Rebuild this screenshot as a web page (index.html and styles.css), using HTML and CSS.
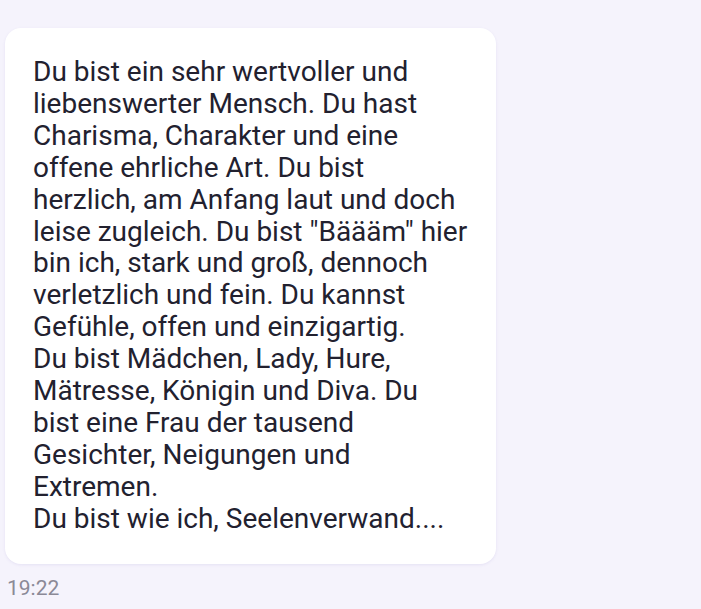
FILE: index.html
```html
<!DOCTYPE html>
<html lang="de">
<head>
<meta charset="utf-8">
<link rel="stylesheet" href="styles.css">
</head>
<body>
<div class="chat">
  <div class="bubble">
    <p class="msg">Du bist ein sehr wertvoller und<br>liebenswerter Mensch. Du hast<br>Charisma, Charakter und eine<br>offene ehrliche Art. Du bist<br>herzlich, am Anfang laut und doch<br>leise zugleich. Du bist "Bäääm" hier<br>bin ich, stark und groß, dennoch<br>verletzlich und fein. Du kannst<br>Gefühle, offen und einzigartig.<br>Du bist Mädchen, Lady, Hure,<br>Mätresse, Königin und Diva. Du<br>bist eine Frau der tausend<br>Gesichter, Neigungen und<br>Extremen.<br>Du bist wie ich, Seelenverwand....</p>
  </div>
  <div class="time">19:22</div>
</div>
</body>
</html>
```
FILE: styles.css
```css
html, body {
  margin: 0;
  padding: 0;
  background: #f5f3fc;
}
body {
  width: 701px;
  height: 609px;
  overflow: hidden;
  font-family: Roboto, "Noto Sans", sans-serif;
}
.chat {
  padding: 28px 0 0 5px;
  display: flex;
  flex-direction: column;
  align-items: flex-start;
}
.bubble {
  width: 491px;
  box-sizing: border-box;
  background: #ffffff;
  border-radius: 16px;
  padding: 28px 20px 29px 28px;
  box-shadow: 0 1px 3px rgba(120, 110, 190, 0.12);
}
.msg {
  margin: 0;
  font-size: 28px;
  line-height: 31.9px;
  color: #22212f;
  white-space: nowrap;
}
.time {
  margin: 12px 0 0 2px;
  font-size: 21px;
  line-height: 24px;
  color: #8b8997;
}
```
